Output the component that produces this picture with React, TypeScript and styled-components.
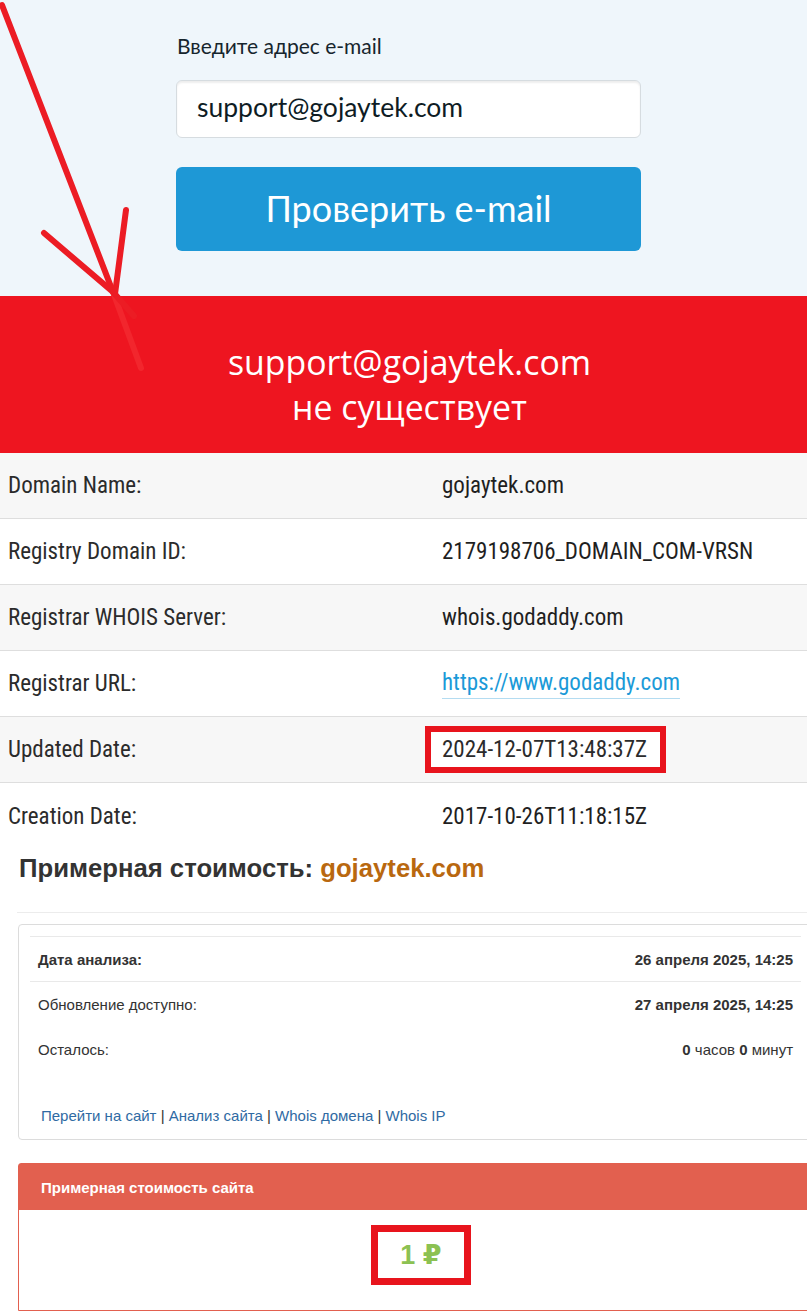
import styled, { createGlobalStyle } from "styled-components";

const GlobalStyle = createGlobalStyle`
  html, body {
    margin: 0;
    padding: 0;
    background: #fff;
  }
  body {
    overflow-x: hidden;
    font-family: "Liberation Sans", Arial, sans-serif;
  }
  * {
    box-sizing: border-box;
  }
`;

const Page = styled.div`
  position: relative;
  width: 807px;
  min-height: 1316px;
  overflow: hidden;
`;

// hand-drawn annotation arrow lying over the page
const ArrowMark = styled.svg`
  position: absolute;
  left: 0;
  top: 0;
  pointer-events: none;
`;

const CheckSection = styled.section`
  background: #eff6fb;
  padding: 34px 0 45px 176px;
`;

const Form = styled.div`
  width: 465px;
  display: flex;
  flex-direction: column;
`;

const Label = styled.label`
  font: 400 21px/24px Lato, "Liberation Sans", sans-serif;
  color: #16252d;
  margin: 0 0 22px 1px;
`;

const EmailInput = styled.input`
  height: 58px;
  background: #fff;
  border: 1px solid #d6dce0;
  border-radius: 6px;
  box-shadow: inset 0 2px 2px rgba(0, 0, 0, 0.07);
  padding: 0 0 4px 20px;
  font: 400 26.5px Lato, "Liberation Sans", sans-serif;
  color: #0e1c24;
  outline: none;
`;

const CheckButton = styled.button`
  margin-top: 29px;
  height: 84px;
  border: none;
  border-radius: 6px;
  background: #1e98d6;
  color: #fff;
  font: 400 36px Lato, "Liberation Sans", sans-serif;
  padding-bottom: 4px;
  cursor: pointer;
`;

const Banner = styled.div`
  background: #ee1520;
  color: #fff;
  text-align: center;
  font: 500 33.8px/45px "Open Sans", "DejaVu Sans", sans-serif;
  padding: 44px 0 23px 12px;
`;

const WhoisTable = styled.div`
  display: flex;
  flex-direction: column;
`;

const WhoisRow = styled.div<{ $shaded: boolean; $last?: boolean }>`
  display: grid;
  grid-template-columns: 434px 1fr;
  align-items: center;
  height: 66px;
  padding-left: 8px;
  background: ${(p) => (p.$shaded ? "#f7f7f7" : "#fff")};
  border-bottom: ${(p) => (p.$last ? "none" : "1px solid #dedede")};
  font: 400 23px "Roboto", sans-serif;
  font-stretch: 87%;
  color: #2b2b2b;
`;

const WhoisValue = styled.span`
  color: #1f1f1f;
`;

const WhoisLink = styled.a`
  justify-self: start;
  color: #1b9ad8;
  text-decoration: none;
  border-bottom: 1px solid #b4dcf1;
  padding-bottom: 2px;
`;

const Highlight = styled.span`
  justify-self: start;
  display: inline-block;
  background: #fff;
  border: 6px solid #e8141d;
  padding: 4px 13px 4px 11px;
  margin: -10px 0 -10px -17px;
`;

const Estimate = styled.section`
  padding: 4px 0 0 18px;
`;

const Heading = styled.h2`
  margin: 0;
  font: 700 25.7px/30px "Liberation Sans", Arial, sans-serif;
  color: #333;
  padding-left: 1px;
`;

const Domain = styled.span`
  color: #b9680f;
`;

const Rule = styled.hr`
  margin: 29px 0 11px -1px;
  border: none;
  border-top: 1px solid #ececec;
`;

const InfoCard = styled.div`
  width: 804px;
  border: 1px solid #dcdcdc;
  border-radius: 4px;
  padding: 11px 20px 13px 11px;
`;

const InfoRow = styled.div<{ $line: boolean }>`
  display: flex;
  justify-content: space-between;
  align-items: center;
  height: 45px;
  padding: 0 8px;
  border-top: ${(p) => (p.$line ? "1px solid #e9e9e9" : "1px solid transparent")};
  font-size: 15px;
  color: #333;
`;

const Bold = styled.b`
  font-weight: 700;
`;

const Links = styled.div`
  margin-top: 35px;
  padding-left: 11px;
  font-size: 15px;
  line-height: 20px;
  color: #333;
  a {
    color: #2f6aa3;
    text-decoration: none;
  }
`;

const PricePanel = styled.div`
  width: 804px;
  margin-top: 23px;
  border: 1px solid #e2604f;
  border-radius: 3px 3px 0 0;
`;

const PriceHeader = styled.div`
  height: 46px;
  display: flex;
  align-items: center;
  padding-left: 22px;
  background: #e2604f;
  color: #fff;
  font-weight: 700;
  font-size: 15px;
`;

const PriceBody = styled.div`
  display: flex;
  justify-content: center;
  padding: 15px 0 25px;
`;

const PriceBox = styled.div`
  border: 7px solid #e8141d;
  padding: 4px 22px;
  margin-left: 2px;
  font: 700 27px/38px "Liberation Sans", "DejaVu Sans", sans-serif;
  color: #8cc152;
`;

const whois = [
  { label: "Domain Name:", value: "gojaytek.com" },
  { label: "Registry Domain ID:", value: "2179198706_DOMAIN_COM-VRSN" },
  { label: "Registrar WHOIS Server:", value: "whois.godaddy.com" },
  { label: "Registrar URL:", value: "https://www.godaddy.com", link: true },
  { label: "Updated Date:", value: "2024-12-07T13:48:37Z", marked: true },
  { label: "Creation Date:", value: "2017-10-26T11:18:15Z" },
];

function App() {
  return (
    <Page>
      <GlobalStyle />
      <CheckSection>
        <Form>
          <Label>Введите адрес e-mail</Label>
          <EmailInput type="text" defaultValue="support@gojaytek.com" />
          <CheckButton>Проверить e-mail</CheckButton>
        </Form>
      </CheckSection>
      <Banner>
        support@gojaytek.com
        <br />
        не существует
      </Banner>
      <WhoisTable>
        {whois.map((row, i) => (
          <WhoisRow key={row.label} $shaded={i % 2 === 0} $last={i === whois.length - 1}>
            <span>{row.label}</span>
            {row.link ? (
              <WhoisLink href="#">{row.value}</WhoisLink>
            ) : row.marked ? (
              <Highlight>{row.value}</Highlight>
            ) : (
              <WhoisValue>{row.value}</WhoisValue>
            )}
          </WhoisRow>
        ))}
      </WhoisTable>
      <Estimate>
        <Heading>
          Примерная стоимость: <Domain>gojaytek.com</Domain>
        </Heading>
        <Rule />
        <InfoCard>
          <InfoRow $line>
            <Bold>Дата анализа:</Bold>
            <Bold>26 апреля 2025, 14:25</Bold>
          </InfoRow>
          <InfoRow $line>
            <span>Обновление доступно:</span>
            <Bold>27 апреля 2025, 14:25</Bold>
          </InfoRow>
          <InfoRow $line={false}>
            <span>Осталось:</span>
            <span>
              <Bold>0</Bold> часов <Bold>0</Bold> минут
            </span>
          </InfoRow>
          <Links>
            <a href="#">Перейти на сайт</a> | <a href="#">Анализ сайта</a> |{" "}
            <a href="#">Whois домена</a> | <a href="#">Whois IP</a>
          </Links>
        </InfoCard>
        <PricePanel>
          <PriceHeader>Примерная стоимость сайта</PriceHeader>
          <PriceBody>
            <PriceBox>1 ₽</PriceBox>
          </PriceBody>
        </PricePanel>
      </Estimate>
      <ArrowMark width="200" height="400" viewBox="0 0 200 400">
        <g fill="none" stroke="#ec1c24" strokeWidth="6" strokeLinecap="round">
          <path d="M2 5 L113 292" />
          <path d="M113 292 L141 368" stroke="#f2262d" />
          <path d="M44 233 L113 292 L134 316" />
          <path d="M126 210 L115 294" />
        </g>
      </ArrowMark>
    </Page>
  );
}

export default App;
